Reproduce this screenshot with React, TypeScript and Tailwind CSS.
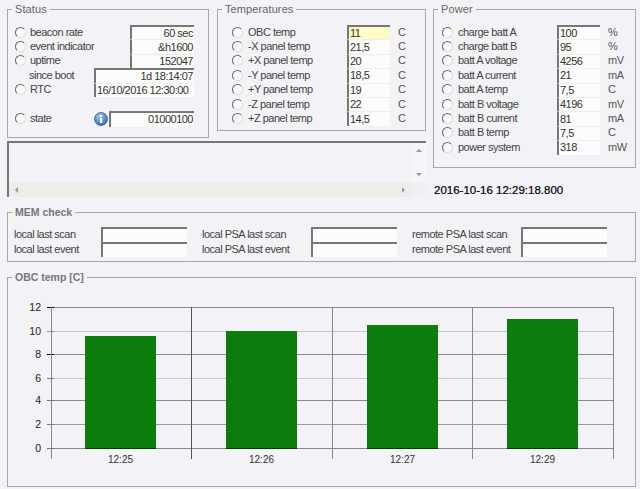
import React from "react";

const Radio = () => (
  <span className="block w-[11px] h-[11px] shrink-0 rounded-full border border-t-[#666] border-l-[#666] border-r-[#ddd] border-b-[#ddd] bg-[#fafafa]" />
);

const Field = ({ w, text, right, top, yellow, h = "h-[14.4px]" }: { w: string; text?: string; right?: boolean; top?: boolean; yellow?: boolean; h?: string }) => (
  <div className={`${w} ${h} shrink-0 flex items-center overflow-hidden whitespace-nowrap border-l-2 border-l-[#777] pl-[1px] pr-[1px] text-[11px] tracking-[-0.5px] leading-none text-[#333] ${top ? "border-t-2 border-t-[#777]" : "border-t border-t-[#eee]"} ${yellow ? "bg-[#fdfac6]" : "bg-[#fcfcfc]"} ${right ? "justify-end" : ""}`}>
    {text}
  </div>
);

const Legend = ({ children, wide }: { children: React.ReactNode; wide?: boolean }) => (
  <legend className={`ml-[4px] px-[3px] leading-[14px] ${wide ? "font-bold text-[10.5px] text-[#777]" : "text-[11px] tracking-[0.1px] text-[#666]"}`}>{children}</legend>
);

const Unit = ({ children }: { children: React.ReactNode }) => (
  <span className="ml-2 text-[11px] tracking-[-0.5px] leading-none text-[#555]">{children}</span>
);

const Row = ({ label, value, unit, top, yellow }: { label: string; value: string; unit: string; top?: boolean; yellow?: boolean }) => (
  <div className="flex h-[14.4px] items-center">
    <Radio />
    <span className="ml-[5px] w-[99px] text-[11px] tracking-[-0.5px] leading-none text-[#444] whitespace-nowrap">{label}</span>
    <Field w="w-[43px]" text={value} top={top} yellow={yellow} />
    <Unit>{unit}</Unit>
  </div>
);

const temps: [string, string][] = [
  ["OBC temp", "11"],
  ["-X panel temp", "21,5"],
  ["+X panel temp", "20"],
  ["-Y panel temp", "18,5"],
  ["+Y panel temp", "19"],
  ["-Z panel temp", "22"],
  ["+Z panel temp", "14,5"],
];

const power: [string, string, string][] = [
  ["charge batt A", "100", "%"],
  ["charge batt B", "95", "%"],
  ["batt A voltage", "4256", "mV"],
  ["batt A current", "21", "mA"],
  ["batt A temp", "7,5", "C"],
  ["batt B voltage", "4196", "mV"],
  ["batt B current", "81", "mA"],
  ["batt B temp", "7,5", "C"],
  ["power system", "318", "mW"],
];

const StatusLabel = ({ children, cls }: { children: React.ReactNode; cls: string }) => (
  <span className={`${cls} text-[11px] tracking-[-0.5px] leading-none text-[#444] whitespace-nowrap`}>{children}</span>
);

const InfoIcon = () => (
  <svg width="14" height="14" viewBox="0 0 14 14" className="shrink-0">
    <defs>
      <radialGradient id="ig" cx="0.4" cy="0.3" r="0.8">
        <stop offset="0" stopColor="#a9c8ea" />
        <stop offset="1" stopColor="#1f5fae" />
      </radialGradient>
    </defs>
    <circle cx="7" cy="7" r="6.5" fill="url(#ig)" stroke="#2a5f9e" strokeWidth="0.8" />
    <rect x="6" y="6" width="2.2" height="5" fill="#fff" />
    <rect x="6" y="3" width="2.2" height="2" fill="#fff" />
  </svg>
);

const MemRow = ({ a, b, c }: { a: string; b: string; c: string }) => {
  const labelCls = "text-[11px] tracking-[-0.5px] leading-none text-[#444] whitespace-nowrap";
  return (
    <div className="flex h-[15px] items-center">
      <span className={`${labelCls} w-[87px]`}>{a}</span>
      <Field w="w-[86px]" h="h-[15px]" top />
      <span className={`${labelCls} ml-[15px] w-[109px]`}>{b}</span>
      <Field w="w-[86px]" h="h-[15px]" top />
      <span className={`${labelCls} ml-[15px] w-[109px]`}>{c}</span>
      <Field w="w-[86px]" h="h-[15px]" top />
    </div>
  );
};

const ys: [number, number, string, string][] = [
  [307, 12, "#8a8a8a", "#000"],
  [331, 10, "#c4c4c4", "#999"],
  [354, 8, "#8a8a8a", "#000"],
  [378, 6, "#c8c8c8", "#777"],
  [400, 4, "#8a8a8a", "#777"],
  [424, 2, "#9a9a9a", "#777"],
  [448, 0, "#8a8a8a", "#777"],
];
const xs = [51, 191, 332, 472, 613];
const bars: [number, number, string][] = [
  [85, 336, "12:25"],
  [226, 331, "12:26"],
  [367, 325, "12:27"],
  [507, 319, "12:29"],
];

const Chart = () => (
  <svg width="627" height="190" viewBox="8 285 627 190" className="block">
    {ys.map(([y, v, c, t]) => (
      <g key={v}>
        <line x1="47" x2="613" y1={y + 0.5} y2={y + 0.5} stroke={c} />
        <line x1="47" x2="54" y1={y + 0.5} y2={y + 0.5} stroke={t} />
        <text x="41" y={y + 4} textAnchor="end" fontSize="10.5" fontFamily="Liberation Sans, sans-serif" fill="#222">{v}</text>
      </g>
    ))}
    {xs.map((x, i) => (
      <line key={x} x1={x + 0.5} x2={x + 0.5} y1="307" y2="459" stroke={i === 1 ? "#555" : "#888"} />
    ))}
    {bars.map(([x, y, l]) => (
      <g key={l}>
        <rect x={x} y={y} width="71" height={448 - y} fill="#0c7c0c" />
        <line x1={x} x2={x + 71} y1="448.5" y2="448.5" stroke="#063c06" />
        <text x={x + 35.5} y="463" textAnchor="middle" fontSize="10" fontFamily="Liberation Sans, sans-serif" fill="#333">{l}</text>
      </g>
    ))}
  </svg>
);

export default function App() {
  return (
    <div className="w-[640px] h-[489px] overflow-hidden bg-[#f3f2f6] pl-[7px] pt-[2px] font-['Liberation_Sans',Arial,sans-serif]">
      <div className="flex h-[196px] w-[629px]">
        <div className="flex w-[419px] flex-col">
          <div className="flex h-[139px] items-start">
            <fieldset className="h-[136px] w-[202px] border border-[#a8a8ac]">
              <Legend>Status</Legend>
              <div className="pl-[7px] pr-[14px] pt-[9px]">
                <div className="flex h-[14.4px] items-center">
                  <Radio />
                  <StatusLabel cls="ml-[4px]">beacon rate</StatusLabel>
                  <div className="ml-auto"><Field w="w-[64px]" text="60 sec" right top /></div>
                </div>
                <div className="flex h-[14.4px] items-center">
                  <Radio />
                  <StatusLabel cls="ml-[4px]">event indicator</StatusLabel>
                  <div className="ml-auto"><Field w="w-[64px]" text="&h1600" right /></div>
                </div>
                <div className="flex h-[14.4px] items-center">
                  <Radio />
                  <StatusLabel cls="ml-[4px]">uptime</StatusLabel>
                  <div className="ml-auto"><Field w="w-[64px]" text="152047" right /></div>
                </div>
                <div className="flex h-[14.4px] items-center">
                  <StatusLabel cls="ml-[14px]">since boot</StatusLabel>
                  <div className="ml-auto"><Field w="w-[100px]" text="1d 18:14:07" right top /></div>
                </div>
                <div className="flex h-[14.4px] items-center">
                  <Radio />
                  <StatusLabel cls="ml-[4px]">RTC</StatusLabel>
                  <div className="ml-auto"><Field w="w-[100px]" text="16/10/2016 12:30:00" /></div>
                </div>
                <div className="mt-[14px] flex h-[16px] items-center">
                  <Radio />
                  <StatusLabel cls="ml-[4px]">state</StatusLabel>
                  <div className="ml-auto flex items-center gap-[1px]">
                    <InfoIcon />
                    <Field w="w-[85px]" h="h-[16px]" text="01000100" right top />
                  </div>
                </div>
              </div>
            </fieldset>
            <fieldset className="ml-[8px] h-[129px] w-[209px] border border-[#a8a8ac]">
              <Legend>Temperatures</Legend>
              <div className="pl-[14px] pt-[9px]">
                {temps.map(([l, v], i) => (
                  <Row key={l} label={l} value={v} unit="C" top={i === 0} yellow={i === 0} />
                ))}
              </div>
            </fieldset>
          </div>
          <div className="flex h-[56px] flex-col border-l-2 border-t-2 border-[#777] bg-[#f3f2f6]">
            <div className="flex flex-1">
              <div className="flex-1" />
              <div className="flex w-[15px] flex-col items-center justify-between bg-[#f6f6f8] py-[6px]">
                <span className="h-0 w-0 border-x-[3px] border-b-[3px] border-x-transparent border-b-[#999]" />
                <span className="h-0 w-0 border-x-[3px] border-t-[3px] border-x-transparent border-t-[#999]" />
              </div>
            </div>
            <div className="flex h-[15px]">
              <div className="flex flex-1 items-center justify-between bg-[#ebeeea] px-[6px]">
                <span className="h-0 w-0 border-y-[3px] border-r-[3px] border-y-transparent border-r-[#999]" />
                <span className="h-0 w-0 border-y-[3px] border-l-[3px] border-y-transparent border-l-[#999]" />
              </div>
              <div className="w-[15px] bg-[#f0f0f2]" />
            </div>
          </div>
        </div>
        <div className="ml-[7px] w-[203px]">
          <fieldset className="h-[166px] border border-[#a8a8ac]">
            <Legend>Power</Legend>
            <div className="pl-[8px] pt-[9px]">
              {power.map(([l, v, u], i) => (
                <Row key={l} label={l} value={v} unit={u} top={i === 0} />
              ))}
            </div>
          </fieldset>
          <div className="ml-[1px] mt-[15px] text-[11.5px] leading-[14px] text-black whitespace-nowrap [-webkit-text-stroke:0.2px_#000]">2016-10-16 12:29:18.800</div>
        </div>
      </div>
      <fieldset className="mt-[7px] h-[57px] w-[629px] border border-[#a8a8ac]">
        <Legend wide>MEM check</Legend>
        <div className="pl-[6px] pt-[8px]">
          <MemRow a="local last scan" b="local PSA last scan" c="remote PSA last scan" />
          <MemRow a="local last event" b="local PSA last event" c="remote PSA last event" />
        </div>
      </fieldset>
      <fieldset className="mt-[8px] h-[217px] w-[629px] border border-[#a8a8ac]">
        <Legend wide>OBC temp [C]</Legend>
        <div className="pt-[1px]">
          <Chart />
        </div>
      </fieldset>
    </div>
  );
}
